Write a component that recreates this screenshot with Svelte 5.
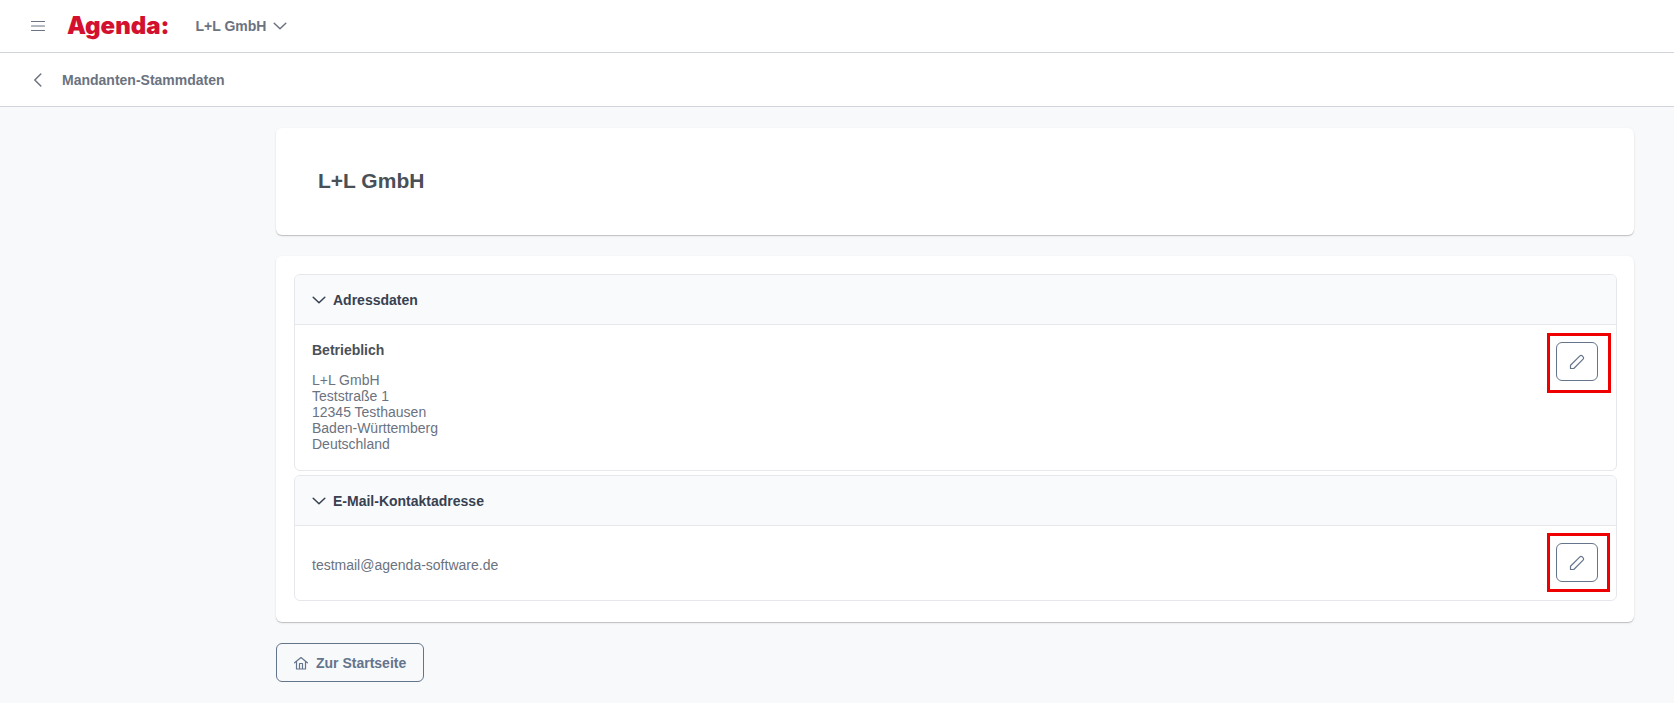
<script>
  let company = 'L+L GmbH';
  let sections = [
    {
      id: 'address',
      title: 'Adressdaten',
      label: 'Betrieblich',
      lines: ['L+L GmbH', 'Teststraße 1', '12345 Testhausen', 'Baden-Württemberg', 'Deutschland'],
      open: true,
    },
    {
      id: 'email',
      title: 'E-Mail-Kontaktadresse',
      label: '',
      lines: ['testmail@agenda-software.de'],
      open: true,
    },
  ];

  function toggle(section) {
    section.open = !section.open;
    sections = sections;
  }
</script>

<header class="topbar">
  <button class="icon-button menu" aria-label="Menü">
    <svg width="16" height="16" viewBox="0 0 16 16">
      <path d="M1.500 3.500h13M1.500 8h13M1.500 12.500h13" />
    </svg>
  </button>
  <a class="logo" href="/">Agenda:</a>
  <button class="company">
    {company}
    <svg width="14" height="14" viewBox="0 0 14 14">
      <path d="M1.2 4.2 7 9.800l5.800-5.600" />
    </svg>
  </button>
</header>

<nav class="subbar">
  <button class="icon-button back" aria-label="Zurück">
    <svg width="16" height="14" viewBox="0 0 16 14">
      <path d="M10.800 1 4.800 7l6 6" />
    </svg>
  </button>
  <span class="page-title">Mandanten-Stammdaten</span>
</nav>

<main>
  <section class="card heading">
    <h1>{company}</h1>
  </section>

  <section class="card panels">
    {#each sections as section}
      <div class="panel">
        <button class="panel-header" aria-expanded={section.open} on:click={() => toggle(section)}>
          <svg class:closed={!section.open} width="14" height="14" viewBox="0 0 14 14">
            <path d="M1.2 4.2 7 9.800l5.800-5.600" />
          </svg>
          {section.title}
        </button>
        {#if section.open}
          <div class="panel-body">
            <div class="details">
              {#if section.label}
                <h2>{section.label}</h2>
              {/if}
              <div class="lines">
                {#each section.lines as line}
                  <div>{line}</div>
                {/each}
              </div>
            </div>
            <div class="edit-wrap {section.id}">
              <button class="outlined edit" aria-label="{section.title} bearbeiten">
                <svg width="16" height="16" viewBox="0 0 16 16">
                  <path d="M1.500 14.500V11.200L10.900 1.900a1.600 1.600 0 0 1 2.300 0l.9.9a1.600 1.600 0 0 1 0 2.300L4.800 14.500z" />
                </svg>
              </button>
            </div>
          </div>
        {/if}
      </div>
    {/each}
  </section>

  <button class="outlined home">
    <svg width="14" height="14" viewBox="0 0 14 14">
      <path d="M.6 6.800 7 1.500l6.400 5.300M2.500 5.500V13h9V5.500M5.500 13V7.500h3V13" />
    </svg>
    Zur Startseite
  </button>
</main>

<style>
  :global(body) {
    background: #f8f9fb;
    color: #6b7280;
    font-family: 'Liberation Sans', Arial, sans-serif;
    font-size: 14px;
    line-height: 16px;
  }

  button {
    margin: 0;
    padding: 0;
    border: none;
    background: none;
    color: inherit;
    font: inherit;
    cursor: pointer;
  }

  svg {
    display: block;
    flex: none;
    fill: none;
    stroke: currentColor;
    stroke-width: 1.2;
    stroke-linecap: round;
    stroke-linejoin: round;
  }

  .topbar,
  .subbar {
    display: flex;
    align-items: center;
    height: 52px;
    padding: 0 30px;
    background: white;
    border-bottom: 1px solid #d1d5db;
  }

  .subbar {
    height: 53px;
  }

  .logo {
    margin: 0 26px 0 21px;
    color: #d3112f;
    font-family: Inter, sans-serif;
    font-size: 24px;
    font-weight: 900;
    line-height: 32px;
    text-decoration: none;
  }

  .company {
    display: flex;
    align-items: center;
    gap: 7px;
    font-weight: bold;
  }

  .company svg,
  .back svg {
    stroke-width: 1.5;
  }

  .page-title {
    margin-left: 16px;
    font-weight: bold;
  }

  main {
    padding: 21px 40px 20px 276px;
  }

  .card {
    margin-bottom: 21px;
    background: white;
    border-radius: 6px;
    box-shadow: 0 1px 1px rgba(0, 0, 0, 0.2), 0 1px 3px rgba(0, 0, 0, 0.06);
  }

  .heading {
    padding: 41px 42px 42px;
  }

  h1 {
    margin: 0;
    color: #495057;
    font-size: 21px;
    line-height: 24px;
  }

  .panels {
    display: flex;
    flex-direction: column;
    gap: 4px;
    padding: 18px 17px 21px 18px;
  }

  .panel {
    border: 1px solid #e5e7eb;
    border-radius: 6px;
    overflow: hidden;
  }

  .panel-header {
    display: flex;
    align-items: center;
    gap: 7px;
    width: 100%;
    height: 49px;
    padding: 0 17px;
    background: #f9fafb;
    color: #374151;
    font-weight: bold;
  }

  .panel-header svg {
    stroke-width: 1.5;
  }

  .closed {
    transform: rotate(-90deg);
  }

  .panel-body {
    display: flex;
    justify-content: space-between;
    align-items: flex-start;
    padding: 17px 18px 18px 17px;
    border-top: 1px solid #e5e7eb;
  }

  h2 {
    margin: 0;
    color: #495057;
    font-size: 14px;
  }

  .lines {
    margin-top: 14px;
  }

  .details {
    display: flow-root;
  }

  .outlined {
    display: flex;
    align-items: center;
    justify-content: center;
    gap: 8px;
    height: 39px;
    border: 1px solid #64748b;
    border-radius: 6px;
    color: #64748b;
    font-weight: bold;
  }

  .edit {
    width: 42px;
  }

  .edit-wrap {
    position: relative;
  }

  .edit-wrap::after {
    content: '';
    position: absolute;
    inset: -9px -13px -12px -9px;
    border: 3px solid #ee0000;
    pointer-events: none;
  }

  .edit-wrap.email::after {
    inset: -10px -12px -10px -9px;
  }

  .home {
    padding: 0 17px;
  }
</style>
